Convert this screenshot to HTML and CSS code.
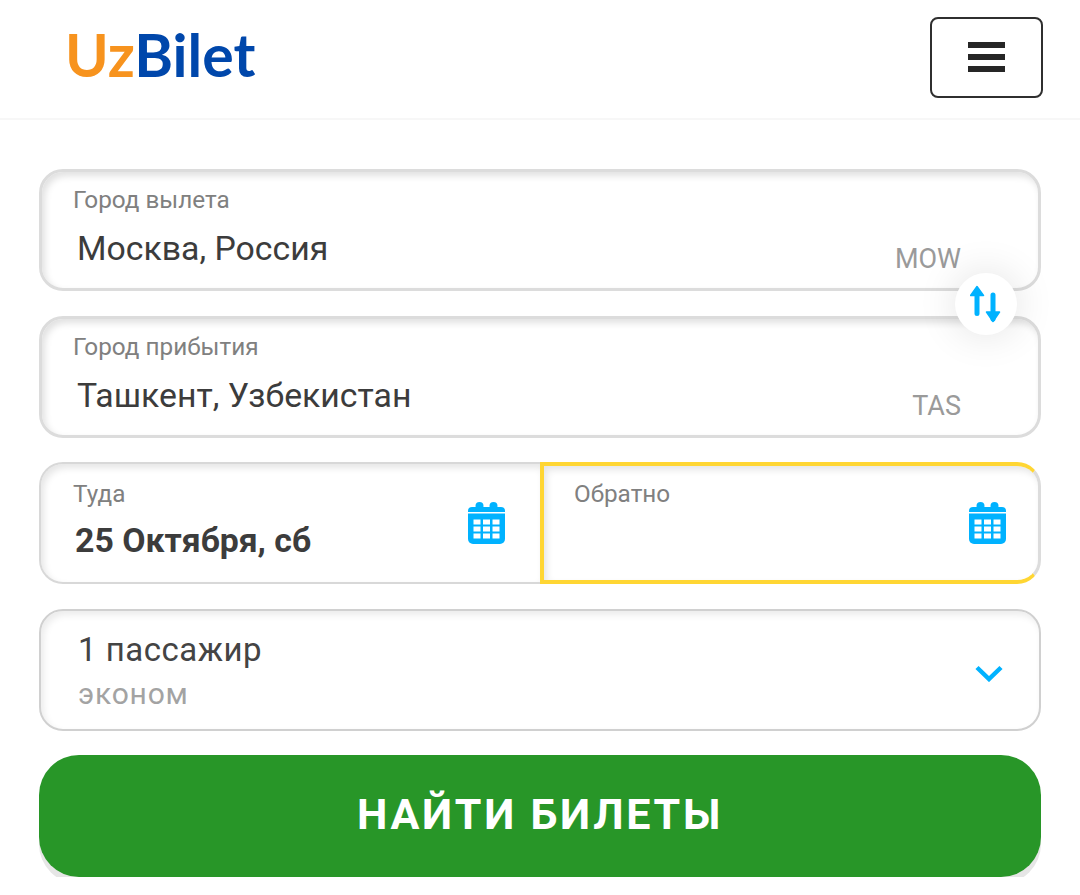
FILE: index.html
```html
<!DOCTYPE html>
<html lang="ru">
<head>
	<meta charset="UTF-8">
	<meta name="viewport" content="width=device-width, initial-scale=1.0">
	<title>UzBilet</title>
	<link rel="stylesheet" href="styles.css">
</head>
<body>

	<!-- HEADER -->
	<header class="header">
		<div class="logo"><span class="logo-uz">Uz</span><span class="logo-bilet">Bilet</span></div>
		<button class="menu-btn" aria-label="Меню">
			<span></span>
			<span></span>
			<span></span>
		</button>
	</header>

	<!-- SEARCH FORM -->
	<form class="search-form">
		<div class="cities">
			<div class="field field-city">
				<div class="field-label">Город вылета</div>
				<div class="city-row">
					<span class="field-value">Москва, Россия</span>
					<span class="city-code">MOW</span>
				</div>
			</div>
			<div class="field field-city">
				<div class="field-label">Город прибытия</div>
				<div class="city-row">
					<span class="field-value">Ташкент, Узбекистан</span>
					<span class="city-code">TAS</span>
				</div>
			</div>
			<div class="swap-btn">
				<svg width="32" height="38" viewBox="0 0 32 38">
					<path class="swap-line" d="M7 6V28.5M23 10V34"/>
					<path class="swap-head" d="M7 1.5L13.5 10.5H0.5ZM23 36.5L29.5 27H16.5Z"/>
				</svg>
			</div>
		</div>

		<div class="dates">
			<div class="date date-there">
				<div>
					<div class="field-label">Туда</div>
					<div class="date-value">25 Октября, сб</div>
				</div>
				<svg class="calendar" width="37" height="42" viewBox="0 0 37 42">
					<circle cx="11.5" cy="4" r="4"/>
					<circle cx="25.5" cy="4" r="4"/>
					<path d="M4 5H33A4 4 0 0 1 37 9V10H0V9A4 4 0 0 1 4 5Z"/>
					<path d="M0 11.5H37V37A5 5 0 0 1 32 42H5A5 5 0 0 1 0 37Z"/>
					<g class="cal-cells">
						<rect x="5.5" y="17.5" width="7" height="5"/>
						<rect x="15" y="17.5" width="7" height="5"/>
						<rect x="24.5" y="17.5" width="7" height="5"/>
						<rect x="5.5" y="24.5" width="7" height="5"/>
						<rect x="15" y="24.5" width="7" height="5"/>
						<rect x="24.5" y="24.5" width="7" height="5"/>
						<rect x="5.5" y="31.5" width="7" height="5"/>
						<rect x="15" y="31.5" width="7" height="5"/>
						<rect x="24.5" y="31.5" width="7" height="5"/>
					</g>
				</svg>
			</div>
			<div class="date date-back">
				<div>
					<div class="field-label">Обратно</div>
				</div>
				<svg class="calendar" width="37" height="42" viewBox="0 0 37 42">
					<circle cx="11.5" cy="4" r="4"/>
					<circle cx="25.5" cy="4" r="4"/>
					<path d="M4 5H33A4 4 0 0 1 37 9V10H0V9A4 4 0 0 1 4 5Z"/>
					<path d="M0 11.5H37V37A5 5 0 0 1 32 42H5A5 5 0 0 1 0 37Z"/>
					<g class="cal-cells">
						<rect x="5.5" y="17.5" width="7" height="5"/>
						<rect x="15" y="17.5" width="7" height="5"/>
						<rect x="24.5" y="17.5" width="7" height="5"/>
						<rect x="5.5" y="24.5" width="7" height="5"/>
						<rect x="15" y="24.5" width="7" height="5"/>
						<rect x="24.5" y="24.5" width="7" height="5"/>
						<rect x="5.5" y="31.5" width="7" height="5"/>
						<rect x="15" y="31.5" width="7" height="5"/>
						<rect x="24.5" y="31.5" width="7" height="5"/>
					</g>
				</svg>
			</div>
		</div>

		<div class="passengers">
			<div>
				<div class="pass-count">1 пассажир</div>
				<div class="pass-class">эконом</div>
			</div>
			<svg class="chevron" width="28" height="17" viewBox="0 0 28 17">
				<path d="M2 2.5L14 14L26 2.5"/>
			</svg>
		</div>

		<button class="find-btn" type="button">НАЙТИ БИЛЕТЫ</button>
	</form>

</body>
</html>
```

FILE: styles.css
```css
* {
	margin: 0;
	padding: 0;
	box-sizing: border-box;
	font-family: 'Roboto', sans-serif;
}

body {
	background: #fff;
	color: #3c3c3c;
}

/* HEADER */
.header {
	height: 120px;
	padding: 17px 37px 0 65px;
	display: flex;
	justify-content: space-between;
	align-items: flex-start;
	border-bottom: 2px solid #f7f7f7;
}

.logo {
	font-family: 'Lato', sans-serif;
	font-size: 59px;
	font-weight: 700;
	line-height: 76px;
}

.logo span {
	font-family: inherit;
}

.logo-uz {
	color: #f7931e;
}

.logo-bilet {
	color: #0047ab;
}

.menu-btn {
	width: 113px;
	height: 81px;
	padding-bottom: 1px;
	background: #fff;
	border: 2px solid #2f2f2f;
	border-radius: 8px;
	display: flex;
	flex-direction: column;
	justify-content: center;
	align-items: center;
	gap: 6px;
}

.menu-btn span {
	width: 37px;
	height: 6px;
	background: #262626;
}

/* SEARCH FORM */
.search-form {
	padding: 49px 39px 0;
	display: flex;
	flex-direction: column;
	gap: 24.5px;
}

.cities {
	position: relative;
	display: flex;
	flex-direction: column;
	gap: 24.5px;
}

.field {
	height: 122px;
	background: #fff;
	border: 3px solid #dcdcdc;
	border-radius: 24px;
	box-shadow: inset 3px 4px 7px rgba(0, 0, 0, 0.12);
}

.field-city {
	padding: 13px 32px 0 31px;
}

.field-label {
	font-size: 24.3px;
	line-height: 30px;
	color: #808080;
}

.city-row {
	display: flex;
	justify-content: space-between;
	align-items: flex-end;
	margin-top: 14px;
	padding-left: 4px;
	height: 40px;
}

.field-value {
	font-size: 33.8px;
	line-height: 40px;
	color: #3c3c3c;
}

.city-code {
	font-size: 27px;
	line-height: 30px;
	color: #9a9a9a;
	margin-right: 45px;
	position: relative;
	top: 5px;
}

.swap-btn {
	position: absolute;
	top: 104px;
	right: 24px;
	width: 62px;
	height: 62px;
	background: #fff;
	border-radius: 50%;
	box-shadow: 0 0 40px rgba(0, 0, 0, 0.12);
	display: flex;
	align-items: center;
	justify-content: center;
}

.swap-line {
	fill: none;
	stroke: #00b2ff;
	stroke-width: 5;
	stroke-linecap: round;
}

.swap-head {
	fill: #00b2ff;
	stroke: #00b2ff;
	stroke-width: 1.5;
	stroke-linejoin: round;
}

/* DATES */
.dates {
	display: grid;
	grid-template-columns: 1fr 1fr;
	height: 122px;
}

.date {
	display: flex;
	justify-content: space-between;
	background: #fff;
	box-shadow: inset 3px 4px 7px rgba(0, 0, 0, 0.1);
}

.date-there {
	border: 2px solid #d8d8d8;
	border-right: none;
	border-radius: 24px 0 0 24px;
	padding: 15px 35px 0 32px;
}

.date-back {
	border: 4px solid #ffd633;
	border-right: 3px solid #dcdcdc;
	border-radius: 0 24px 24px 0;
	padding: 13px 32px 0 30px;
}

.date-value {
	font-size: 33.8px;
	font-weight: 700;
	line-height: 40px;
	margin-top: 12px;
	padding-left: 2px;
	color: #3c3c3c;
}

.calendar {
	margin-top: 23px;
	fill: #00b2ff;
}

.cal-cells rect {
	fill: #fff;
}

/* PASSENGERS */
.passengers {
	height: 122px;
	display: flex;
	justify-content: space-between;
	align-items: center;
	padding: 0 36px 0 37px;
	border: 2px solid #d0d0d0;
	border-radius: 24px;
	box-shadow: inset 3px 4px 7px rgba(0, 0, 0, 0.08);
}

.pass-count {
	font-size: 33px;
	line-height: 42px;
	letter-spacing: 0.5px;
	margin-top: 2px;
	color: #444;
}

.pass-class {
	font-size: 30px;
	line-height: 36px;
	margin-top: 5px;
	letter-spacing: 0.8px;
	color: #a3a3a3;
}

.chevron {
	margin-top: 7px;
}

.chevron path {
	fill: none;
	stroke: #00b2ff;
	stroke-width: 4.5;
}

/* BUTTON */
.find-btn {
	height: 122px;
	border: none;
	border-radius: 40px;
	padding-bottom: 4px;
	background: #289628;
	color: #fff;
	font-size: 43px;
	font-weight: 700;
	letter-spacing: 2.7px;
	box-shadow: 0 7px 0 #e6e6e6;
}
```
